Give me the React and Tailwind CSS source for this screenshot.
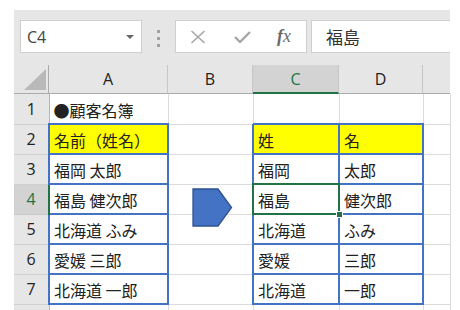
const cols = [
  { key: 'A', w: 119 },
  { key: 'B', w: 85 },
  { key: 'C', w: 86 },
  { key: 'D', w: 84 },
  { key: 'E', w: 27 },
];

const rows = [
  { n: 1, A: '●顧客名簿' },
  { n: 2, A: '名前（姓名）', C: '姓', D: '名', head: true },
  { n: 3, A: '福岡 太郎', C: '福岡', D: '太郎' },
  { n: 4, A: '福島 健次郎', C: '福島', D: '健次郎' },
  { n: 5, A: '北海道 ふみ', C: '北海道', D: 'ふみ' },
  { n: 6, A: '愛媛 三郎', C: '愛媛', D: '三郎' },
  { n: 7, A: '北海道 一郎', C: '北海道', D: '一郎' },
  { n: 8, hidden: true },
];

const jp = { fontFamily: '"Noto Sans CJK JP", "Noto Sans", sans-serif' };

const isBlue = (row, key) => {
  if (row.n < 2 || row.n > 7) return false;
  return key === 'A' || key === 'C' || key === 'D';
};

const Arrow = () => (
  <svg width="41" height="40" viewBox="0 0 41 40" className="absolute left-[23px] top-[3px] z-10">
    <polygon points="1,1 26,1 39.5,19.5 26,38 1,38" fill="#4472c4" stroke="#2f528f" strokeWidth="1.3" />
  </svg>
);

const FormulaBar = () => (
  <div className="flex h-[52px] pt-[10px] items-start">
    <div className="ml-[6px] flex h-[33px] w-[122px] items-center justify-between border border-[#cfcfcf] bg-white pl-[6px] pr-[7px]">
      <span className="text-[16px] text-[#444]" style={{ fontFamily: '"Open Sans", sans-serif' }}>C4</span>
      <span className="h-0 w-0 border-x-[4px] border-t-[4px] border-x-transparent border-t-[#666]" />
    </div>
    <div className="ml-[15px] mt-[10px] flex flex-col gap-[4px]">
      <span className="h-[3px] w-[3px] bg-[#a0a0a0]" />
      <span className="h-[3px] w-[3px] bg-[#a0a0a0]" />
      <span className="h-[3px] w-[3px] bg-[#a0a0a0]" />
    </div>
    <div className="ml-[15px] flex h-[33px] w-[132px] items-center border border-[#cfcfcf] bg-white">
      <svg width="16" height="14" viewBox="0 0 16 14" className="ml-[14px]">
        <path d="M1.5 1 L14.5 13 M14.5 1 L1.5 13" stroke="#a6a6a6" strokeWidth="1.6" fill="none" />
      </svg>
      <svg width="17" height="12" viewBox="0 0 17 12" className="ml-[28px]">
        <path d="M1 6 L6 11 L16 1" stroke="#a6a6a6" strokeWidth="2.4" fill="none" />
      </svg>
      <span className="ml-[26px] text-[18px] italic text-[#6b6b6b]" style={{ fontFamily: '"Liberation Serif", serif' }}>
        <span className="font-bold">f</span>x
      </span>
    </div>
    <div className="ml-[4px] flex h-[33px] flex-1 items-center border-y border-l border-[#cfcfcf] bg-white pl-[14px]">
      <span className="text-[17px] text-[#333]" style={jp}>福島</span>
    </div>
  </div>
);

const ColumnHeader = () => (
  <div className="flex h-[32px] items-end">
    <div className="relative h-[29px] w-[35px] border-r border-b border-[#ababab]">
      <svg width="22" height="21" viewBox="0 0 22 21" className="absolute right-[2px] bottom-[3px]">
        <polygon points="22,0 22,21 0,21" fill="#b9b9b9" />
      </svg>
    </div>
    {cols.map((c) => {
      const sel = c.key === 'C';
      return (
        <div
          key={c.key}
          style={{ width: c.w }}
          className={`flex h-[29px] items-center justify-center text-[16px] ${
            c.key === 'E' ? 'border-b border-[#ababab]' : 'border-r border-[#c6c6c6]'
          } ${sel ? 'border-b-2 border-b-[#217346] bg-[#d3d3d3] text-[#217346]' : 'border-b border-b-[#ababab] text-[#222]'}`}
        >
          <span style={{ fontFamily: '"Open Sans", sans-serif' }}>{c.key === 'E' ? '' : c.key}</span>
        </div>
      );
    })}
  </div>
);

export default function App() {
  return (
    <div className="h-[310px] w-[460px] overflow-hidden bg-white pl-[14px] pt-[10px]">
      <div className="w-[436px] bg-[#e6e6e6]">
        <FormulaBar />
        <ColumnHeader />
        <table className="table-fixed border-collapse" style={{ width: 436 }}>
          <colgroup>
            <col style={{ width: 35 }} />
            {cols.map((c) => (
              <col key={c.key} style={{ width: c.w }} />
            ))}
          </colgroup>
          <tbody>
            {rows.map((row) => {
              const selRow = row.n === 4;
              return (
                <tr key={row.n} className="h-[30px]">
                  <td
                    className={`p-0 text-center text-[16px] ${
                      selRow
                        ? 'border-r-2 border-b border-r-[#217346] border-b-[#c8c8c8] bg-[#d3d3d3] text-[#217346]'
                        : 'border-r border-b border-r-[#b4b4b4] border-b-[#d0d0d0] bg-[#e6e6e6] text-[#222]'
                    }`}
                    style={{ fontFamily: '"Open Sans", sans-serif' }}
                  >
                    {row.hidden ? '' : row.n}
                  </td>
                  {cols.map((c) => {
                    const blue = isBlue(row, c.key);
                    const yellow = row.head && blue;
                    const selected = selRow && c.key === 'C';
                    return (
                      <td
                        key={c.key}
                        className={`relative p-0 pl-[4px] text-left align-middle text-[16px] leading-none whitespace-nowrap text-[#222] ${
                          blue ? 'border-2 border-[#4472c4]' : 'border-r border-b border-[#dcdcdc]'
                        } ${yellow ? 'bg-[#ffff00]' : 'bg-white'}`}
                        style={jp}
                      >
                        <span className="relative top-[1px]">{row[c.key] || ''}</span>
                        {selected && (
                          <>
                            <span className="pointer-events-none absolute -inset-[2px] border-2 border-[#217346]" />
                            <span className="absolute -right-[5px] -bottom-[5px] z-10 h-[7px] w-[7px] border border-white bg-[#217346]" />
                          </>
                        )}
                        {selRow && c.key === 'B' && <Arrow />}
                      </td>
                    );
                  })}
                </tr>
              );
            })}
          </tbody>
        </table>
      </div>
    </div>
  );
}
